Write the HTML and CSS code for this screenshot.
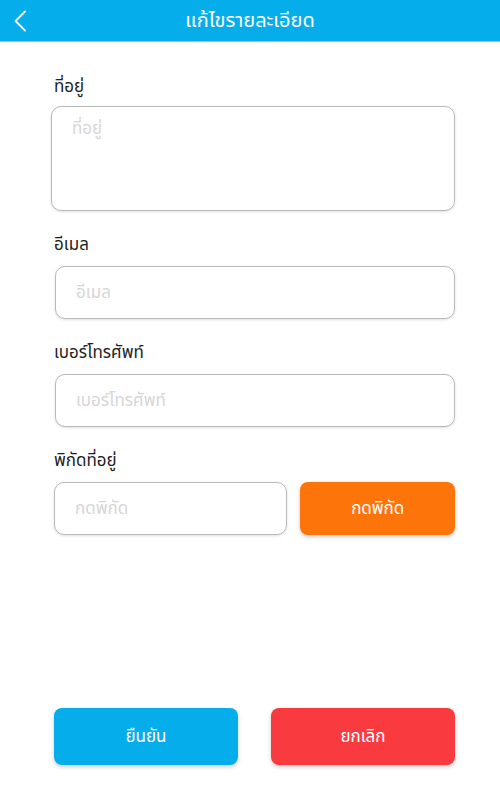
FILE: index.html
```html
<!DOCTYPE html>
<html lang="th">
<head>
<meta charset="utf-8">
<title>แก้ไขรายละเอียด</title>
<link rel="stylesheet" href="styles.css">
</head>
<body>
<div class="screen">
  <header class="topbar">
    <button class="back" aria-label="back">
      <svg width="14" height="22" viewBox="0 0 14 22"><path d="M12 1.5 L2.5 11 L12 20.5" fill="none" stroke="#fff" stroke-width="1.8" stroke-linecap="round" stroke-linejoin="round"/></svg>
    </button>
    <h1 class="title">แก้ไขรายละเอียด</h1>
  </header>
  <main class="form">
    <div class="field">
      <label class="label">ที่อยู่</label>
      <div class="box area"><span class="ph">ที่อยู่</span></div>
    </div>
    <div class="field">
      <label class="label">อีเมล</label>
      <div class="box input"><span class="ph">อีเมล</span></div>
    </div>
    <div class="field">
      <label class="label">เบอร์โทรศัพท์</label>
      <div class="box input"><span class="ph">เบอร์โทรศัพท์</span></div>
    </div>
    <div class="field">
      <label class="label">พิกัดที่อยู่</label>
      <div class="row">
        <div class="box input coord"><span class="ph">กดพิกัด</span></div>
        <button class="btn orange">กดพิกัด</button>
      </div>
    </div>
  </main>
  <footer class="actions">
    <button class="btn blue big">ยืนยัน</button>
    <button class="btn red big">ยกเลิก</button>
  </footer>
</div>
</body>
</html>
```
FILE: styles.css
```css
* { box-sizing: border-box; }
html, body { margin: 0; padding: 0; background: #fff; }
body { font-family: "Noto Sans Thai", "Noto Sans", "Noto Sans CJK SC", sans-serif; color: #1e1e1e; }
.screen { width: 500px; height: 800px; display: flex; flex-direction: column; }
.topbar { height: 42px; background: #05aeeb; display: flex; align-items: center; justify-content: center; position: relative; border-bottom: 1px solid #6fd0f3; }
.back { position: absolute; left: 12px; top: 10px; background: none; border: 0; padding: 0; width: 16px; height: 22px; }
.title { margin: 0; font-size: 20px; font-weight: 400; color: #fff; }
.form { padding: 33px 45px 0 54px; display: flex; flex-direction: column; }
.field { display: flex; flex-direction: column; }
.label { font-size: 17px; line-height: 24px; color: #1e1e1e; }
.box { border: 1px solid #b9b9b9; border-radius: 10px; background: #fff; box-shadow: 0 1px 3px rgba(0,0,0,0.12); padding: 0 20px; display: flex; }
.ph { color: #d6d6d6; font-size: 17px; line-height: 24px; }
.area { height: 105px; margin: 7px 0 22px -3px; padding-top: 10px; align-items: flex-start; }
.input { height: 53px; margin: 9px 0 22px 1px; align-items: center; }
.row { display: flex; gap: 13px; margin-top: 9px; }
.coord { width: 234px; margin: 0; }
.btn { border: 0; border-radius: 8px; color: #fff; font-family: inherit; font-size: 17px; box-shadow: 0 2px 4px rgba(0,0,0,0.2); }
.orange { background: #fd740b; width: 155px; height: 53px; }
.actions { margin-top: auto; padding: 0 45px 35px 54px; display: flex; justify-content: space-between; }
.big { width: 184px; height: 57px; }
.blue { background: #05aeeb; }
.red { background: #f93b40; }
```
